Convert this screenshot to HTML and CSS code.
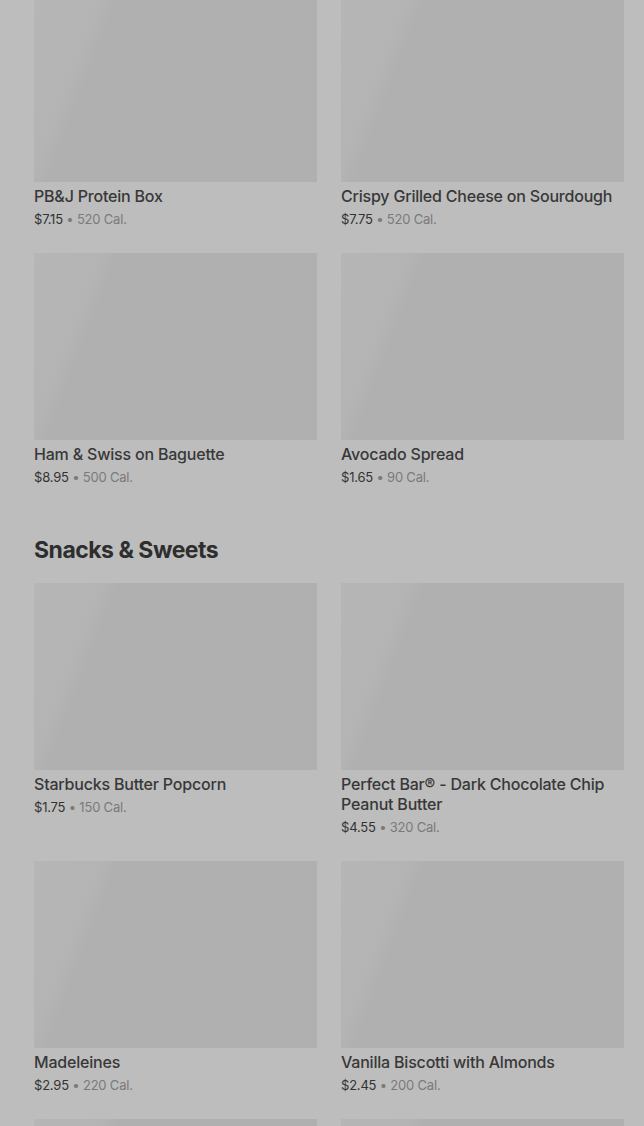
FILE: index.html
```html
<!DOCTYPE html>
<html lang="en">
<head>
<meta charset="utf-8">
<title>Menu</title>
<link rel="stylesheet" href="styles.css">
</head>
<body>
<main class="menu">
  <section class="section">
    <div class="grid">
      <div class="item"><div class="thumb"></div><div class="name">PB&amp;J Protein Box</div><div class="meta"><span class="price">$7.15</span> • 520 Cal.</div></div>
      <div class="item"><div class="thumb"></div><div class="name">Crispy Grilled Cheese on Sourdough</div><div class="meta"><span class="price">$7.75</span> • 520 Cal.</div></div>
      <div class="item"><div class="thumb"></div><div class="name">Ham &amp; Swiss on Baguette</div><div class="meta"><span class="price">$8.95</span> • 500 Cal.</div></div>
      <div class="item"><div class="thumb"></div><div class="name">Avocado Spread</div><div class="meta"><span class="price">$1.65</span> • 90 Cal.</div></div>
    </div>
  </section>
  <section class="section">
    <h2 class="heading">Snacks &amp; Sweets</h2>
    <div class="grid">
      <div class="item"><div class="thumb"></div><div class="name">Starbucks Butter Popcorn</div><div class="meta"><span class="price">$1.75</span> • 150 Cal.</div></div>
      <div class="item"><div class="thumb"></div><div class="name">Perfect Bar® - Dark Chocolate Chip Peanut Butter</div><div class="meta"><span class="price">$4.55</span> • 320 Cal.</div></div>
      <div class="item"><div class="thumb"></div><div class="name">Madeleines</div><div class="meta"><span class="price">$2.95</span> • 220 Cal.</div></div>
      <div class="item"><div class="thumb"></div><div class="name">Vanilla Biscotti with Almonds</div><div class="meta"><span class="price">$2.45</span> • 200 Cal.</div></div>
      <div class="item"><div class="thumb"></div><div class="name">&nbsp;</div><div class="meta">&nbsp;</div></div>
      <div class="item"><div class="thumb"></div><div class="name">&nbsp;</div><div class="meta">&nbsp;</div></div>
    </div>
  </section>
</main>
</body>
</html>
```

FILE: styles.css
```css
html, body {
  margin: 0;
  padding: 0;
  background: #bdbdbd;
  overflow: hidden;
}
body {
  font-family: Inter, "Liberation Sans", sans-serif;
  color: #333;
}
.menu {
  margin-top: -5px;
  padding: 0 20px 0 34px;
}
.heading {
  margin: 47px 0 17px;
  font-size: 23px;
  line-height: 32px;
  font-weight: 700;
  color: #2e2e2e;
  letter-spacing: -0.5px;
}
.grid {
  display: grid;
  grid-template-columns: 283px 283px;
  column-gap: 24px;
  row-gap: 24px;
}
.thumb {
  height: 187px;
  background: linear-gradient(111deg, #b6b6b6 0%, #b4b4b4 19%, #b0b0b0 24%, #b0b0b0 100%);
}
.name {
  margin-top: 4px;
  font-size: 16px;
  line-height: 20px;
  font-weight: 500;
  color: #383838;
  letter-spacing: -0.2px;
}
.meta {
  margin-top: 3px;
  font-size: 13px;
  line-height: 20px;
  color: #7a7a7a;
  letter-spacing: -0.2px;
}
.price {
  color: #333;
}
```
